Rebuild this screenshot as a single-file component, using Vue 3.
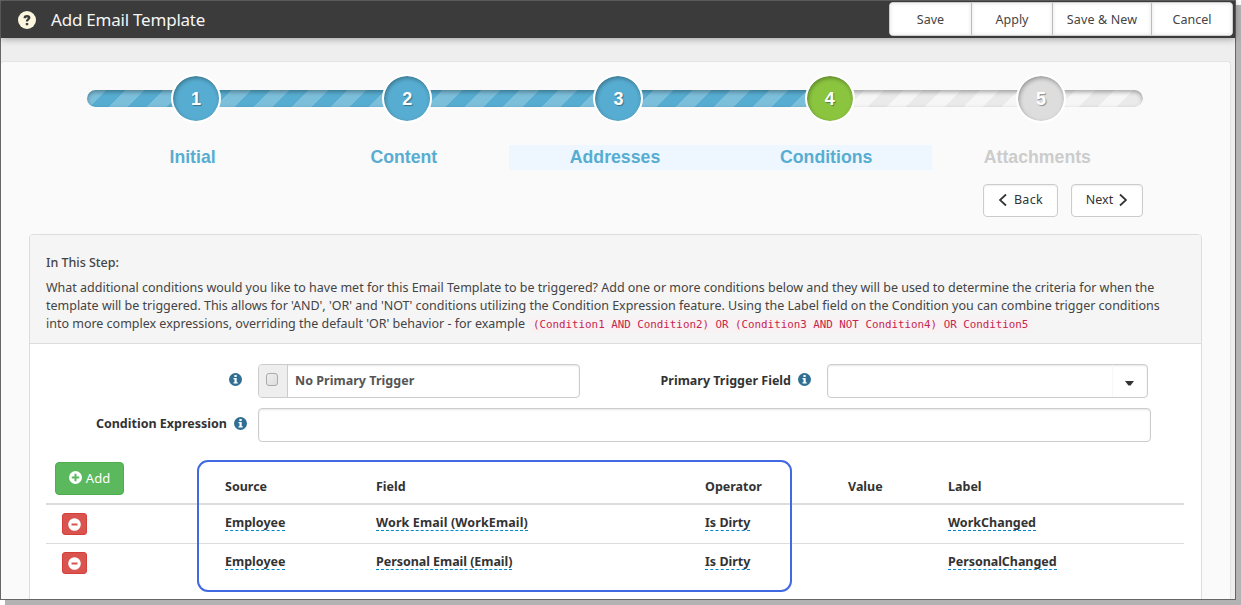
<script setup>
const actions = [
  { label: 'Save', w: 'w1' },
  { label: 'Apply', w: 'w2' },
  { label: 'Save & New', w: 'w3' },
  { label: 'Cancel', w: 'w4' },
]
const steps = [
  { n: 1, label: 'Initial', state: 'done' },
  { n: 2, label: 'Content', state: 'done' },
  { n: 3, label: 'Addresses', state: 'done lit' },
  { n: 4, label: 'Conditions', state: 'active lit' },
  { n: 5, label: 'Attachments', state: 'todo' },
]
const intro = [
  'What additional conditions would you like to have met for this Email Template to be triggered? Add one or more conditions below and they will be used to determine the criteria for when the',
  "template will be triggered. This allows for 'AND', 'OR' and 'NOT' conditions utilizing the Condition Expression feature. Using the Label field on the Condition you can combine trigger conditions",
  "into more complex expressions, overriding the default 'OR' behavior - for example",
]
const rows = [
  ['Employee', 'Work Email (WorkEmail)', 'Is Dirty', 'WorkChanged'],
  ['Employee', 'Personal Email (Email)', 'Is Dirty', 'PersonalChanged'],
]
</script>

<template>
  <div class="screen">
  <div class="window">
    <header class="top">
      <svg class="help" viewBox="0 0 18 18"><circle cx="9" cy="9" r="9" fill="#fdf6df" /><path d="M5.600 7.200V6.400Q6 4 9 4Q12.400 4.100 12.400 6.800Q12.400 8.300 11 9.100Q10.200 9.600 10.200 10.600H7.800Q7.700 8.800 9.100 8Q9.800 7.500 9.700 6.900Q9.600 6.200 9 6.200Q8.200 6.200 8.100 7.200ZM7.800 11.900H10.200V14.200H7.800Z" fill="#3b3b3b" /></svg>
      <h1>Add Email Template</h1>
      <div class="actions">
        <button v-for="a in actions" :key="a.label" :class="a.w"><span>{{ a.label }}</span></button>
      </div>
    </header>
    <main class="page">
      <section class="stepper">
        <div class="bar"><i class="b first"></i><i class="b"></i><i class="b"></i><i class="b"></i><i class="b g"></i><i class="b g last"></i></div>
        <div class="circles">
          <div v-for="s in steps" :key="s.n" class="cell"><b class="circle" :class="s.state">{{ s.n }}</b></div>
        </div>
      </section>
      <div class="labels">
        <div v-for="s in steps" :key="s.n" :class="s.state">{{ s.label }}</div>
      </div>
      <div class="nav">
        <button class="back"><svg viewBox="0 0 10 14"><path d="M8 1.500L2 7L8 12.500" /></svg><span>Back</span></button>
        <button class="next"><span>Next</span><svg viewBox="0 0 10 14"><path d="M2 1.500L8 7L2 12.500" /></svg></button>
      </div>
      <section class="panel">
        <div class="head">
          <div class="t">In This Step:</div>
          <p><span>{{ intro[0] }}</span></p>
          <p><span>{{ intro[1] }}</span></p>
          <p><span>{{ intro[2] }}</span><code>(Condition1 AND Condition2) OR (Condition3 AND NOT Condition4) OR Condition5</code></p>
        </div>
        <div class="form">
          <div class="row">
            <div class="lab a"><svg class="info" viewBox="0 0 13 13"><circle cx="6.500" cy="6.500" r="6.500" /><path d="M5.400 2.100H7.700V4H5.400ZM4.500 5H7.700V9.200H8.700V10.600H4.500V9.200H5.500V6.300H4.500Z" fill="#fff" /></svg></div>
            <div class="input check"><span class="box"><i></i></span><span class="npt">No Primary Trigger</span></div>
            <div class="lab b2"><span class="ptf">Primary Trigger Field</span><svg class="info" viewBox="0 0 13 13"><circle cx="6.500" cy="6.500" r="6.500" /><path d="M5.400 2.100H7.700V4H5.400ZM4.500 5H7.700V9.200H8.700V10.600H4.500V9.200H5.500V6.300H4.500Z" fill="#fff" /></svg></div>
            <div class="input select"><span><svg viewBox="0 0 9 5"><path d="M0 0H9L5.500 4.500H3.500Z" fill="#333" /></svg></span></div>
          </div>
          <div class="row second">
            <div class="lab c"><span class="ce">Condition Expression</span><svg class="info" viewBox="0 0 13 13"><circle cx="6.500" cy="6.500" r="6.500" /><path d="M5.400 2.100H7.700V4H5.400ZM4.500 5H7.700V9.200H8.700V10.600H4.500V9.200H5.500V6.300H4.500Z" fill="#fff" /></svg></div>
            <div class="input expr"></div>
          </div>
          <div class="table">
            <div class="tr th">
              <div><button class="add"><svg viewBox="0 0 13 13"><circle cx="6.500" cy="6.500" r="6.500" fill="#fff" /><path d="M5.500 2.800H7.500V5.500H10.200V7.500H7.500V10.200H5.500V7.500H2.800V5.500H5.500Z" fill="#5cb85c" /></svg><span>Add</span></button></div>
              <div>Source</div><div>Field</div><div>Operator</div><div>Value</div><div>Label</div>
            </div>
            <div v-for="(r, i) in rows" :key="i" class="tr td">
              <div><button class="del"><svg viewBox="0 0 13 13"><circle cx="6.500" cy="6.500" r="6.300" fill="#fff" /><path d="M3.500 5.500H9.500V7.500H3.500Z" fill="#d9534f" /></svg></button></div>
              <div><a>{{ r[0] }}</a></div><div><a :class="'f' + i">{{ r[1] }}</a></div><div><a>{{ r[2] }}</a></div><div></div><div><a :class="'g' + i">{{ r[3] }}</a></div>
            </div>
          </div>
        </div>
      </section>
    </main>
    <div class="callout"></div>
  </div>
  </div>
</template>

<style>
body { background: #fff; }
</style>

<style scoped>
* { box-sizing: border-box; }
.screen { width: 1241px; height: 605px; overflow: hidden; background: #fff; }
.window { position: relative; width: 1236px; height: 600px; border: 1px solid #666; background: #eee; box-shadow: 5px 5px 0 #b3b3b3; font: 12.5px/18px "Noto Sans", sans-serif; color: #333; display: flex; flex-direction: column; }
button { font: inherit; color: inherit; padding: 0; margin: 0; display: flex; align-items: center; justify-content: center; white-space: nowrap; }
.top { height: 37px; flex: none; background: #3b3b3b; box-shadow: 0 1px 7px rgba(0,0,0,.35); display: flex; position: relative; align-items: flex-start; }
.help { width: 18px; height: 18px; margin: 10px 0 0 16.500px; }
h1 { margin: 6px 0 0 15.500px; font-size: 17px; font-weight: 400; line-height: 26px; color: #f5f5f5; letter-spacing: -.22px; white-space: nowrap; }
.actions { margin: 1px 2px 0 auto; display: flex; height: 34px; width: 344px; background: #fff; border-radius: 4px; border: 1px solid #ccc; overflow: hidden; }
.actions button { border: 0; border-right: 1px solid #bbb; background: #fff; box-shadow: inset 0 0 4px #e4e4e4; height: 32px; padding-top: 2px; color: #444; }
.actions button:last-child { border-right: 0; }
.w1 { width: 82px; } .w2 { width: 81px; } .w3 { width: 99px; letter-spacing: .15px; } .w4 { width: 80px; }
.page { margin-top: 23px; width: 1230px; flex: 1; border: 1px solid #e4e4e4; border-left: 0; border-bottom: 0; border-radius: 3px 3px 0 0; background: #fafafa; overflow: hidden; }
.stepper { margin: 12px 0 0 86px; width: 1056px; height: 49px; display: grid; }
.bar { grid-area: 1/1; align-self: center; height: 17px; display: flex; border-radius: 9px; overflow: hidden; position: relative; }
.bar::after { content: ""; position: absolute; inset: 0; border-radius: 9px; box-shadow: inset 0 2px 4px rgba(0,0,0,.33); }
.b { width: 211.200px; flex: none; background: repeating-linear-gradient(135deg, #7cbfdb 0 11.100px, #57add1 11.100px 24.700px, #7cbfdb 24.700px 27.200px); }
.b.g { background: repeating-linear-gradient(135deg, #f6f6f6 0 11.100px, #eaeaea 11.100px 24.700px, #f6f6f6 24.700px 27.200px); }
.b.first { width: 109.500px; background: repeating-linear-gradient(135deg, #7cbfdb 0 13.500px, #57add1 13.500px 27.200px); }
.b.last { width: 101.700px; }
.circles { grid-area: 1/1; display: grid; grid-template-columns: repeat(5, 1fr); z-index: 1; }
.cell { display: flex; justify-content: center; align-items: center; padding-left: 7px; }
.circle { width: 50px; height: 49px; border: 2px solid #fff; border-radius: 50%; background-clip: padding-box; font: bold 18px/47px "Liberation Sans", sans-serif; text-align: center; color: #fff; text-shadow: 1px 1px 1px rgba(0,0,0,.35); box-shadow: inset 1px 2px 4px rgba(0,0,0,.33); background-color: #57add1; }
.circle.active { background-color: #8bc53f; }
.circle.todo { background-color: #ddd; }
.labels { margin: 22px 0 0 86px; width: 1056px; display: grid; grid-template-columns: repeat(5, 1fr); height: 25px; font: bold 17.700px/24px "Liberation Sans", sans-serif; text-align: center; color: #57add1; }
.labels .lit { background: #eef7ff; }
.labels .todo { color: #ccc; }
.nav { margin: 14px 0 0 982px; display: flex; gap: 13px; height: 33px; }
.nav button { height: 33px; border: 1px solid #ccc; border-radius: 4px; background: #fff; padding-bottom: 2px; box-shadow: inset 0 1px 2px #eee; }
.back { width: 75px; gap: 6px; letter-spacing: .35px; } .next { width: 72px; gap: 5px; }
.nav svg { width: 10px; height: 14px; fill: none; stroke: #333; stroke-width: 1.700; }
.panel { margin: 17px 0 0 28px; width: 1173px; height: 380px; border: 1px solid #ddd; border-radius: 4px; background: #fff; }
.head { height: 109px; border-bottom: 1px solid #ddd; background: #f5f5f5; padding: 19px 0 0 16px; border-radius: 3px 3px 0 0; white-space: nowrap; letter-spacing: -.012px; }
.t { font-weight: 500; margin-bottom: 7px; color: #444; }
p { margin: 0; height: 18px; color: #444; }
code { font: 10.840px/15px "DejaVu Sans Mono", monospace; letter-spacing: 0; color: #c7254e; background: #f9f2f4; padding: 2px 4px; margin-left: 4px; border-radius: 3px; }
.form { padding-top: 20px; }
.row { display: flex; height: 34px; font-weight: 700; }
.lab { display: flex; justify-content: flex-end; align-items: center; padding-bottom: 2px; white-space: nowrap; gap: 7px; }
.lab.a { width: 211.500px; margin-right: 16.500px; padding-bottom: 3px; } .lab.b2 { width: 231px; margin-right: 16px; padding-bottom: 3px; } .lab.c { width: 217px; margin-right: 11px; }
.ptf { padding-top: 2px; }
.info { width: 13px; height: 13px; fill: #2e6f93; }
.lab.c .info { margin-top: -1px; }
.input { height: 34px; border: 1px solid #ccc; border-radius: 4px; box-shadow: inset 0 1px 2px rgba(0,0,0,.1); background: #fff; display: flex; }
.check { width: 322px; color: #555; }
.box { width: 29px; border-right: 1px solid #ccc; background: #eee; padding: 8px 0 0 7px; border-radius: 3px 0 0 3px; }
.box i { display: block; width: 12px; height: 13px; border: 1px solid #aaa; border-radius: 3px; background: linear-gradient(135deg,#eee,#ddd); }
.npt { margin: 7px 0 0 7px; letter-spacing: .03px; }
.select { width: 321px; justify-content: flex-end; }
.select span { width: 35px; border-left: 1px solid #f7f7f7; padding: 0 0 0 12px; }
.select svg { width: 9px; height: 5px; display: block; margin-top: 15.500px; }
.second { margin-top: 10px; }
.expr { width: 893px; }
.table { margin: 10px 0 0 16px; width: 1138px; font-weight: 700; white-space: nowrap; }
.tr { display: grid; grid-template-columns: 179px 151px 329px 143px 100px 1fr; }
.th { height: 53px; border-bottom: 2px solid #ddd; padding-top: 10px; }
.th > div { padding-top: 16px; }
.th > div:first-child { padding: 0 0 0 9px; }
.td { height: 39px; border-bottom: 1px solid #ddd; padding-top: 9px; }
.td:last-child { border: 0; }
.td > div:first-child { padding-left: 16px; margin-top: -1px; }
.td a { display: inline-block; line-height: 17px; height: 17px; border-bottom: 1px dashed #08c; }
.f0 { letter-spacing: .12px; } .f1, .g1 { letter-spacing: -.05px; }
.add { width: 69px; height: 33px; background: #5cb85c; border: 1px solid #4cae4c; border-radius: 4px; color: #fff; font-weight: 400; font-size: 13px; gap: 4px; padding-bottom: 2px; }
.add svg, .del svg { width: 13px; height: 13px; }
.del { width: 25px; height: 22px; background: #d9534f; border: 1px solid #d43f3a; border-radius: 3px; }
.callout { position: absolute; left: 196px; top: 459px; width: 595px; height: 132px; border: 2px solid #4169e1; border-radius: 11px; }
</style>
